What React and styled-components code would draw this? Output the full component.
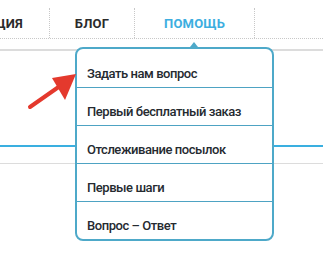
import React from 'react'
import styled, {createGlobalStyle} from 'styled-components'

const GlobalStyle = createGlobalStyle`
  body {
    margin: 0;
    background: #fff;
    font-family: Roboto, "Noto Sans", sans-serif;
    overflow: hidden;
  }
`

const Page = styled.div`
  position: relative;
  width: 323px;
  height: 269px;
`

const Nav = styled.nav`
  display: flex;
  padding-top: 8px;
  height: 30px;
  border-bottom: 1px dotted #c8c8c8;
`

const NavItem = styled.div`
  position: relative;
  box-sizing: border-box;
  width: ${props => props.w ? props.w + 'px' : 'auto'};
  flex: ${props => props.w ? 'none' : '1'};
  display: flex;
  align-items: center;
  justify-content: ${props => props.end ? 'flex-end' : 'center'};
  padding-right: ${props => props.end ? '26px' : '0'};
  border-right: ${props => props.last ? 'none' : '1px dotted #c8c8c8'};
  white-space: nowrap;
  font-size: 13px;
  font-weight: 700;
  letter-spacing: 0.2px;
  color: ${props => props.active ? '#3daee0' : '#2b2b2b'};
`

const GrayRule = styled.div`
  height: ${props => props.h}px;
  margin-top: ${props => props.gap}px;
  background: #dcdcdc;
`

const BlueRule = styled.div`
  height: 2px;
  margin-top: 94px;
  background: #3aafe0;
`

const Menu = styled.ul`
  position: absolute;
  left: -60px;
  top: 39px;
  width: 199px;
  box-sizing: border-box;
  margin: 0;
  padding: 1px 0 0;
  list-style: none;
  background: #fff;
  border: 2px solid #4ea9c9;
  border-radius: 8px;
  z-index: 2;

  &::before {
    content: '';
    position: absolute;
    left: 113px;
    top: -7px;
    border-left: 4px solid transparent;
    border-right: 4px solid transparent;
    border-bottom: 5px solid #4ea9c9;
  }
`

const MenuItem = styled.li`
  box-sizing: border-box;
  height: ${props => props.last ? '37px' : '38px'};
  padding: 16px 0 0 10px;
  border-bottom: ${props => props.last ? 'none' : '1px solid #4ea3c3'};
  font-size: 13px;
  font-weight: 500;
  line-height: 16px;
  letter-spacing: -0.45px;
  color: #252a30;
  white-space: nowrap;
`

const Arrow = styled.svg`
  position: absolute;
  left: 0;
  top: 0;
  z-index: 3;
  pointer-events: none;
`

const items = [
  'Задать нам вопрос',
  'Первый бесплатный заказ',
  'Отслеживание посылок',
  'Первые шаги',
  'Вопрос – Ответ',
]

export default function App() {
  return (
    <Page>
      <GlobalStyle />
      <Nav>
        <NavItem w={50} end>ИНФОРМАЦИЯ</NavItem>
        <NavItem w={85}>БЛОГ</NavItem>
        <NavItem w={120} active>
          ПОМОЩЬ
          <Menu>
            {items.map((x, i) => (
              <MenuItem key={x} last={i === items.length - 1}>{x}</MenuItem>
            ))}
          </Menu>
        </NavItem>
        <NavItem last />
      </Nav>
      <GrayRule h={2} gap={10} />
      <BlueRule />
      <GrayRule h={1} gap={16} />
      <Arrow width="323" height="269" viewBox="0 0 323 269">
        <line x1="30" y1="107" x2="60" y2="86" stroke="#e4392d" strokeWidth="4" strokeLinecap="round" />
        <polygon points="76,74 52,78 65,100" fill="#e4392d" />
      </Arrow>
    </Page>
  )
}
